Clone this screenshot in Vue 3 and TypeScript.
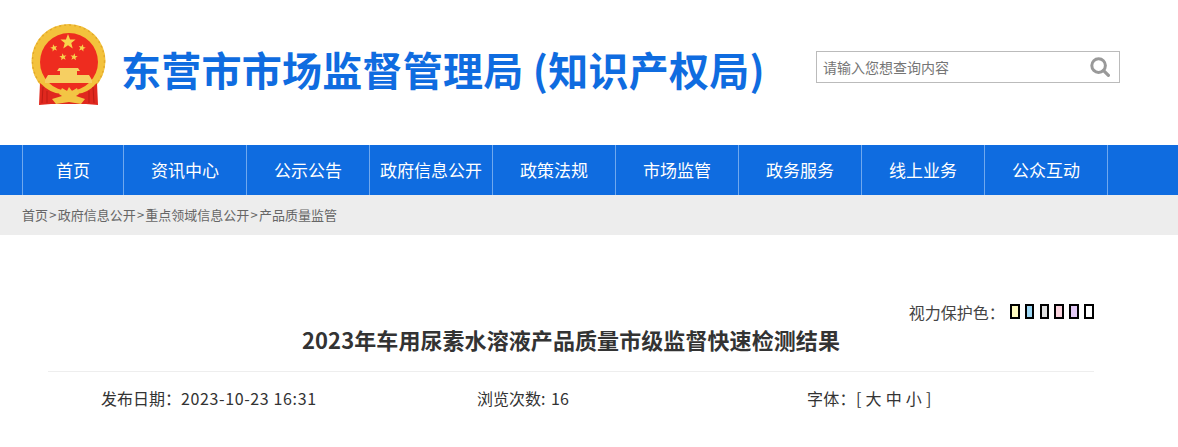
<script setup lang="ts">
const navItems = ['首页', '资讯中心', '公示公告', '政府信息公开', '政策法规', '市场监管', '政务服务', '线上业务', '公众互动']
const crumbs = ['首页', '政府信息公开', '重点领域信息公开', '产品质量监管']
const swatches = ['#fffbc0', '#9ed8f5', '#e0e0e0', '#fbd4de', '#e2c9f5', '#ffffff']
const star = 'M0 -10 L2.6 -3.2 L9.5 -3.1 L4.1 1.2 L5.9 8.1 L0 4.2 L-5.9 8.1 L-4.1 1.2 L-9.5 -3.1 L-2.6 -3.2 Z'
const smallStars = [
  { x: 25, y: 25, r: -15 },
  { x: 53, y: 25, r: 15 },
  { x: 34, y: 34, r: -8 },
  { x: 45, y: 34, r: 8 }
]
</script>

<template>
  <div class="page">
    <header class="top">
      <svg class="emblem" viewBox="0 0 78 84" aria-hidden="true">
        <circle cx="39.5" cy="38" r="37" fill="#f3c23c" />
        <circle cx="39.5" cy="38" r="36" fill="none" stroke="#e2a82a" stroke-width="1.4" stroke-dasharray="2 3" />
        <circle cx="40" cy="39" r="29" fill="#ee2c1f" />
        <path :d="star" transform="translate(39 19) scale(0.8)" fill="#f8d34c" />
        <path
          v-for="s in smallStars"
          :key="s.x + '-' + s.y"
          :d="star"
          :transform="`translate(${s.x} ${s.y}) rotate(${s.r}) scale(0.38)`"
          fill="#f8d34c"
        />
        <path d="M30 45 L49 45 L51 48 L48 48 L48 52 L60 52 L63 57 L63 60 L16 60 L16 57 L19 52 L31 52 L31 48 L28 48 Z" fill="#f6cf62" />
        <path d="M11 60 Q22 71 33 71 L47 71 Q58 71 68 60 L69 82 L57 81 L22 81 L10 82 Z" fill="#e0281e" />
        <path d="M14 64 L13 80 M18 68 L18 80 M64 64 L65 80 M60 68 L60 80" stroke="#bd1c15" stroke-width="1" fill="none" />
        <path d="M33 65 L38 68 L40 64 L43 68 L48 65 L50 71 L47 73 L56 76 L52 81 L40 79 L27 81 L23 76 L33 73 L30 71 Z" fill="#f3c544" />
      </svg>
      <h1 class="site-name">东营市市场监督管理局 (知识产权局)</h1>
      <div class="search">
        <span class="search-hint">请输入您想查询内容</span>
        <svg class="search-icon" viewBox="0 0 20 20" aria-hidden="true">
          <circle cx="8.6" cy="8.6" r="6.8" fill="none" stroke="#999" stroke-width="3" />
          <path d="M13.6 13.6 L18.4 18.4" stroke="#999" stroke-width="3.2" stroke-linecap="round" />
        </svg>
      </div>
    </header>

    <nav class="nav">
      <a v-for="item in navItems" :key="item" class="nav-item">{{ item }}</a>
    </nav>

    <div class="crumbs">
      <template v-for="(crumb, i) in crumbs" :key="crumb">
        <span>{{ crumb }}</span><span v-if="i < crumbs.length - 1" class="crumb-sep">&gt;</span>
      </template>
    </div>

    <main class="article">
      <div class="eye-care">
        <span class="eye-label">视力保护色：</span>
        <i v-for="c in swatches" :key="c" class="swatch" :style="{ background: c }" />
      </div>
      <h2 class="title">2023年车用尿素水溶液产品质量市级监督快速检测结果</h2>
      <div class="meta">
        <span class="meta-date">发布日期：<span class="meta-time">2023-10-23 16:31</span></span>
        <span class="meta-views">浏览次数: 16</span>
        <span class="meta-font">字体：[ 大 中 小 ]</span>
      </div>
    </main>
  </div>
</template>

<style>
html, body {
  margin: 0;
  background: #fff;
  overflow: hidden;
}
</style>

<style scoped>
.page {
  width: 1178px;
  height: 447px;
  overflow: hidden;
  font-family: "Noto Sans CJK SC", "Liberation Sans", sans-serif;
  color: #333;
}

.top {
  height: 145px;
  display: flex;
  align-items: center;
  padding: 0 58px 0 29px;
  box-sizing: border-box;
}

.emblem {
  width: 78px;
  height: 84px;
  margin: -16px 14px 0 0;
  flex: none;
}

.site-name {
  margin: -8px 0 0;
  font-size: 40px;
  line-height: 50px;
  font-weight: 700;
  color: #0f6ce0;
  white-space: nowrap;
  letter-spacing: 0.25px;
}

.search {
  margin: -12px 0 0 auto;
  width: 304px;
  height: 32px;
  box-sizing: border-box;
  border: 1px solid #bbb;
  display: flex;
  align-items: center;
  justify-content: space-between;
  padding: 0 9px 0 6px;
}

.search-hint {
  font-size: 14px;
  color: #757575;
}

.search-icon {
  width: 20px;
  height: 20px;
}

.nav {
  height: 50px;
  background: #0f6ce0;
  display: flex;
  padding-left: 22px;
}

.nav-item {
  width: 123px;
  box-sizing: border-box;
  border-right: 1px solid #6fa8ee;
  color: #fff;
  font-size: 17px;
  line-height: 50px;
  text-align: center;
}

.nav-item:first-child {
  width: 102px;
  border-left: 1px solid #6fa8ee;
}

.crumbs {
  height: 40px;
  background: #ededed;
  padding-left: 22px;
  font-size: 13px;
  line-height: 40px;
  color: #666;
}

.crumb-sep {
  display: inline-block;
  width: 9.67px;
  text-align: center;
}

.article {
  padding: 69px 84.5px 0 48px;
}

.eye-care {
  display: flex;
  align-items: center;
  justify-content: flex-end;
  gap: 5.3px;
  height: 18px;
}

.eye-label {
  font-size: 16px;
  line-height: 18px;
  margin: -2px 0 0 0;
  color: #444;
}

.swatch {
  width: 9.5px;
  height: 15px;
  box-sizing: border-box;
  border: 2px solid #000;
  margin-top: -3px;
}

.title {
  margin: 1px 0 0;
  height: 48px;
  border-bottom: 1px solid #eee;
  width: 1046px;
  font-size: 22px;
  line-height: 32px;
  font-weight: 700;
  letter-spacing: 0.08px;
  text-align: center;
  color: #333;
  box-sizing: content-box;
}

.meta {
  display: flex;
  font-size: 16px;
  line-height: 24px;
  margin-top: 14px;
  color: #333;
  white-space: nowrap;
}

.meta-date {
  margin-left: 53px;
  width: 376px;
}

.meta-time {
  letter-spacing: 0.62px;
}

.meta-views {
  width: 330px;
  word-spacing: 2px;
}

.meta-font {
  letter-spacing: 0.3px;
}
</style>
